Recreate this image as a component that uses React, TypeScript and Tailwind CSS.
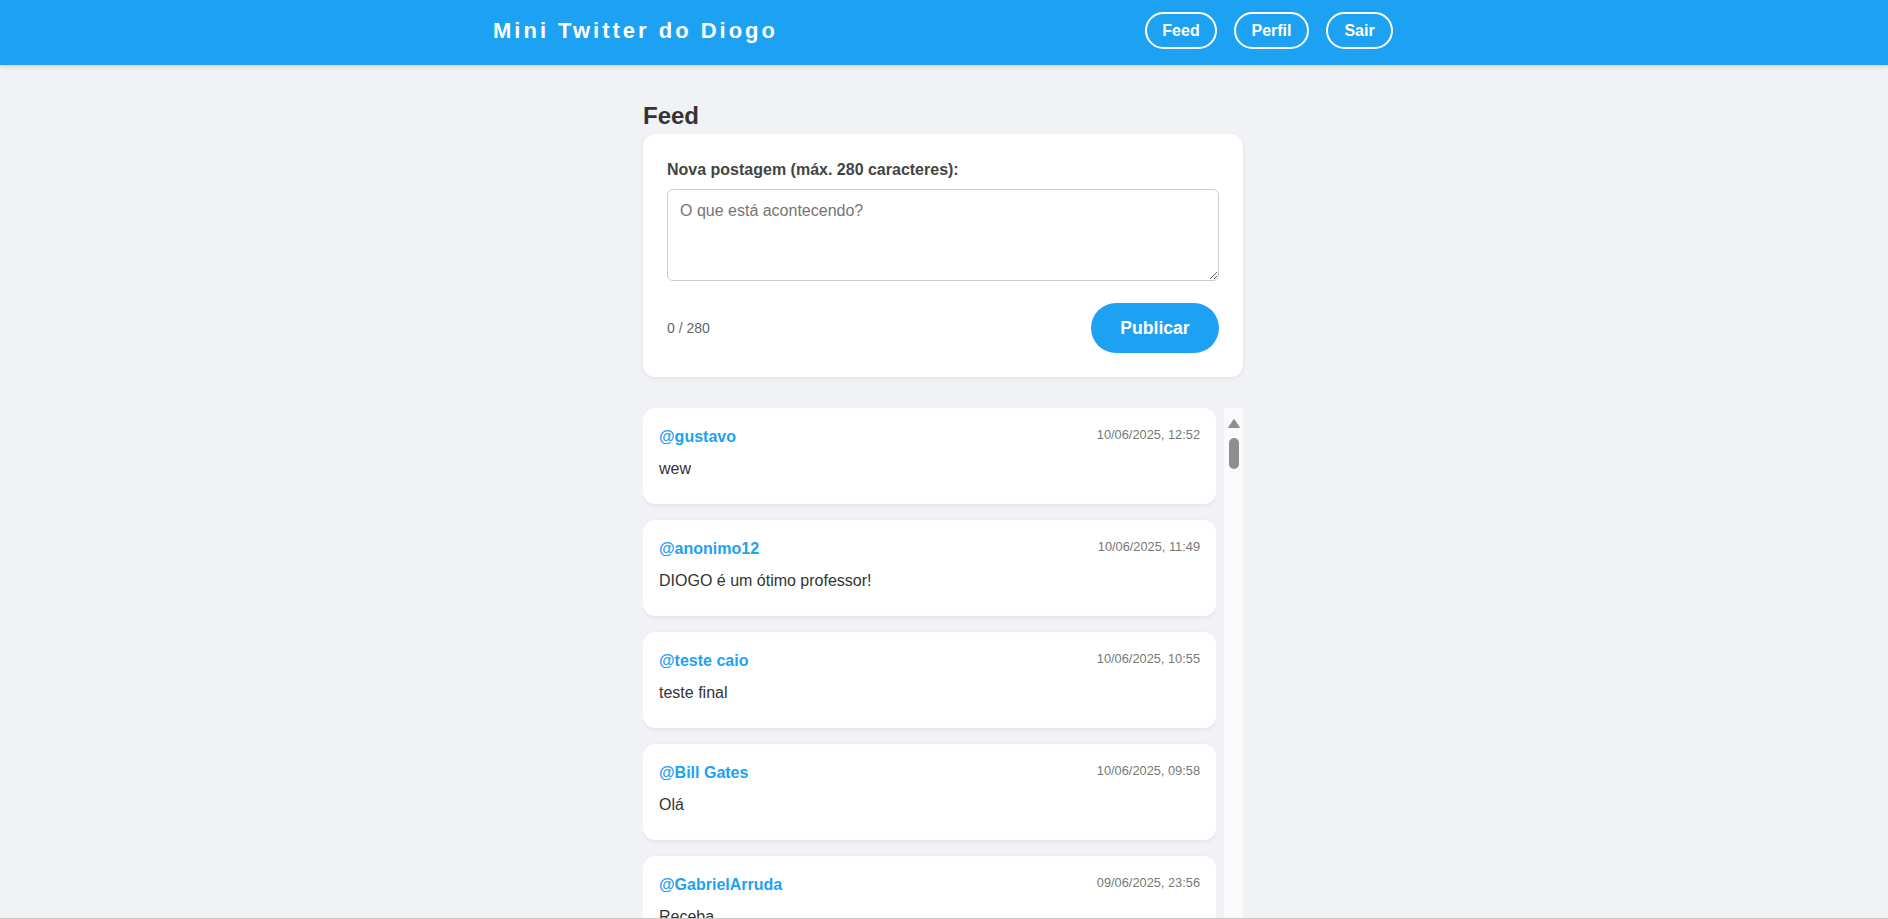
import React from "react";

type Post = { user: string; date: string; text: string };

const posts: Post[] = [
  { user: "@gustavo", date: "10/06/2025, 12:52", text: "wew" },
  { user: "@anonimo12", date: "10/06/2025, 11:49", text: "DIOGO é um ótimo professor!" },
  { user: "@teste caio", date: "10/06/2025, 10:55", text: "teste final" },
  { user: "@Bill Gates", date: "10/06/2025, 09:58", text: "Olá" },
  { user: "@GabrielArruda", date: "09/06/2025, 23:56", text: "Receba" },
  { user: "@diogo", date: "09/06/2025, 22:10", text: "Bem-vindos ao Mini Twitter!" },
];

function PostCard({ post }: { post: Post }) {
  return (
    <article className="shrink-0 bg-white rounded-[12px] shadow-[0_1px_4px_rgba(0,0,0,0.08)] px-4 pt-[17px] pb-[15px]">
      <div className="flex justify-between items-start mb-2">
        <span className="font-bold text-[16px] leading-[24px] text-[#1da1f2]">{post.user}</span>
        <span className="text-[12.8px] leading-[1.5] text-[#777]">{post.date}</span>
      </div>
      <p className="text-[16px] leading-[24px] text-[#333] mb-2">{post.text}</p>
    </article>
  );
}

export default function App() {
  return (
    <div className="relative h-[919px] overflow-hidden bg-[#f0f2f5] flex flex-col font-['Liberation_Sans',Arial,sans-serif]">
      <header className="relative z-10 h-[65px] shrink-0 bg-[#1da1f2] shadow-[0_2px_4px_rgba(0,0,0,0.12)] pr-[2px]">
        <div className="max-w-[900px] mx-auto h-full flex items-center justify-between pb-[4px]">
          <h1 className="text-white font-bold text-[22px] leading-[1.15] tracking-[3px]">
            Mini Twitter do Diogo
          </h1>
          <nav className="flex gap-[17px]">
            <button className="w-[72px] h-[37px] rounded-full border-2 border-white text-white font-bold text-[16px] leading-none">
              Feed
            </button>
            <button className="w-[75px] h-[37px] rounded-full border-2 border-white text-white font-bold text-[16px] leading-none">
              Perfil
            </button>
            <button className="w-[67px] h-[37px] rounded-full border-2 border-white text-white font-bold text-[16px] leading-none">
              Sair
            </button>
          </nav>
        </div>
      </header>

      <div className="flex-1 min-h-0 flex justify-center pr-[2px]">
        <main className="w-[600px] h-full flex flex-col pt-[33px]">
          <h2 className="text-[24px] font-bold leading-[36px] text-[#333]">Feed</h2>

          <section className="shrink-0 bg-white rounded-[12px] shadow-[0_1px_4px_rgba(0,0,0,0.08)] p-6">
            <label className="block text-[16px] font-bold leading-[24px] text-[#444] mb-[7px]">
              Nova postagem (máx. 280 caracteres):
            </label>
            <textarea
              className="block w-full h-[92px] border border-[#ccc] rounded-[6px] p-[12px] text-[16px] leading-[normal] text-[#333] placeholder:text-[#757575] resize-y outline-none"
              placeholder="O que está acontecendo?"
            />
            <div className="flex justify-between items-center mt-[22px]">
              <span className="text-[14px] text-[#666]">0 / 280</span>
              <button className="w-[128px] h-[50px] rounded-full bg-[#1da1f2] text-white font-bold text-[17.6px]">
                Publicar
              </button>
            </div>
          </section>

          <div className="flex-1 min-h-0 mt-[31px] flex gap-[8px]">
            <div className="flex-1 min-w-0 flex flex-col gap-4 overflow-hidden">
              {posts.map((p) => (
                <PostCard key={p.user + p.date} post={p} />
              ))}
            </div>
            <div className="w-[19px] shrink-0 bg-[#fafafa] flex flex-col items-center pt-[11px]">
              <svg width="12" height="9" viewBox="0 0 12 9">
                <path d="M6 0.5 L11.5 8.5 L0.5 8.5 Z" fill="#8e8e8e" strokeLinejoin="round" stroke="#8e8e8e" strokeWidth="1" />
              </svg>
              <div className="mt-[10px] w-[10px] h-[31px] rounded-full bg-[#8e8e8e]" />
            </div>
          </div>
        </main>
      </div>

      <div className="absolute bottom-0 left-0 right-0 h-[1px] bg-[#c8c8c8]" />
    </div>
  );
}
